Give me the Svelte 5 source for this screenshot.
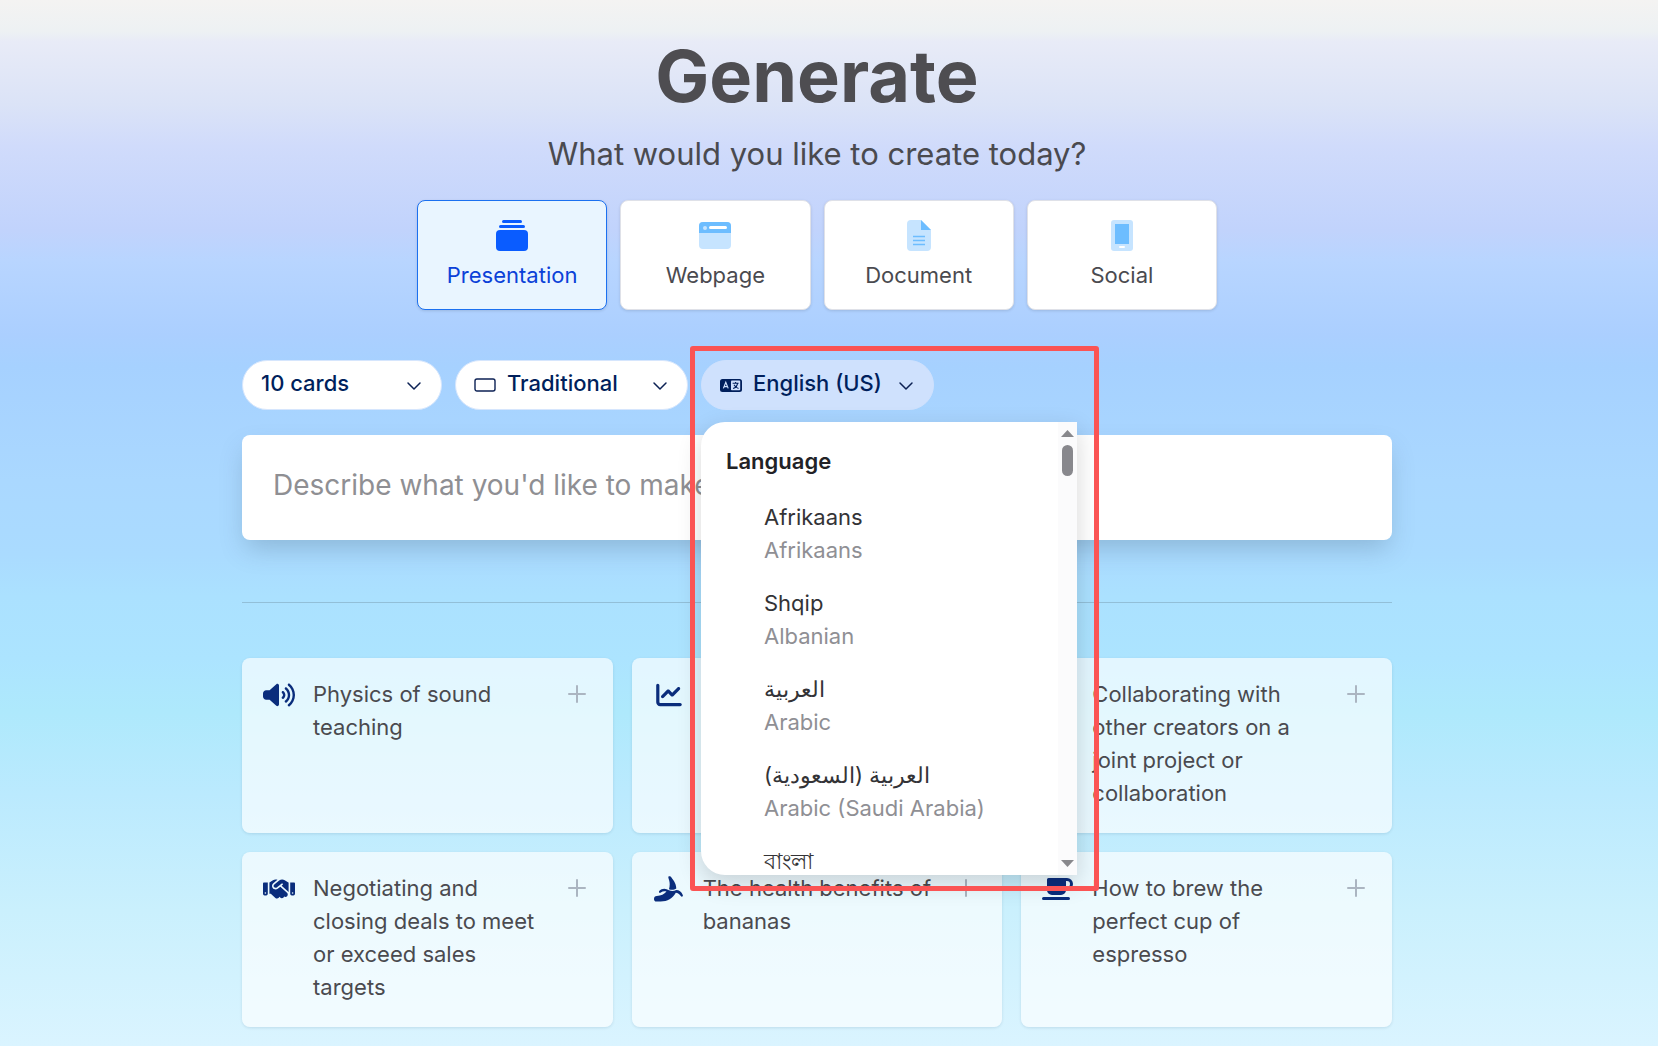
<script lang="ts">
  let selectedType = $state('presentation')
  let languageOpen = $state(true)
  let prompt = $state('')

  const types = [
    { id: 'presentation', label: 'Presentation' },
    { id: 'webpage', label: 'Webpage' },
    { id: 'document', label: 'Document' },
    { id: 'social', label: 'Social' }
  ]

  const languages = [
    { native: 'Afrikaans', name: 'Afrikaans' },
    { native: 'Shqip', name: 'Albanian' },
    { native: 'العربية', name: 'Arabic' },
    { native: 'العربية (السعودية)', name: 'Arabic (Saudi Arabia)' },
    { native: 'বাংলা', name: '' }
  ]

  const ideas = [
    { icon: 'sound', text: 'Physics of sound teaching' },
    { icon: 'chart', text: '' },
    { icon: '', text: 'Collaborating with other creators on a joint project or collaboration' },
    { icon: 'handshake', text: 'Negotiating and closing deals to meet or exceed sales targets' },
    { icon: 'banana', text: 'The health benefits of bananas' },
    { icon: 'cup', text: 'How to brew the perfect cup of espresso' }
  ]
</script>

{#snippet chevron()}
  <svg class="chevron" viewBox="0 0 16 10" aria-hidden="true">
    <path d="M2 2l6 6 6-6" />
  </svg>
{/snippet}

<main class="page">
  <h1>Generate</h1>
  <p class="subtitle">What would you like to create today?</p>

  <div class="types">
    {#each types as type}
      <button
        class="type"
        class:selected={selectedType === type.id}
        onclick={() => (selectedType = type.id)}
      >
        <svg class="type-icon" viewBox="0 0 32 32" aria-hidden="true">
          {#if type.id === 'presentation'}
            <rect x="6" y="0" width="20" height="3" rx="1.5" fill="#0a5cff" />
            <rect x="3" y="5" width="26" height="3" rx="1.5" fill="#0a5cff" />
            <rect x="0" y="10" width="32" height="21" rx="4" fill="#0a5cff" />
          {:else if type.id === 'webpage'}
            <rect x="0" y="2" width="32" height="27" rx="4" fill="#c6e4ff" />
            <path d="M0 13V6a4 4 0 0 1 4-4h24a4 4 0 0 1 4 4v7z" fill="#6dbdff" />
            <circle cx="6" cy="8" r="2" fill="#c6e4ff" />
            <rect x="10" y="6" width="18" height="3" rx="1.5" fill="#fff" />
          {:else if type.id === 'document'}
            <path d="M8 0h10l10 10v17a4 4 0 0 1-4 4H8a4 4 0 0 1-4-4V4a4 4 0 0 1 4-4z" fill="#c6e4ff" />
            <path d="M18 0l10 10H18z" fill="#6dbdff" />
            <path d="M10 16.5h12M10 20.5h12M10 24.5h12" stroke="#6dbdff" stroke-width="1.4" />
          {:else}
            <rect x="5" y="0" width="22" height="31" rx="3" fill="#c6e4ff" />
            <rect x="9" y="4" width="14" height="20" fill="#6dbdff" />
            <rect x="13" y="26" width="6" height="2" rx="1" fill="#fff" />
          {/if}
        </svg>
        {type.label}
      </button>
    {/each}
  </div>

  <section class="workspace">
    <div class="options">
      <button class="pill cards">
        <span>10 cards</span>
        {@render chevron()}
      </button>
      <button class="pill">
        <svg class="pill-icon" viewBox="0 0 22 16" aria-hidden="true">
          <rect x="1" y="2" width="20" height="12" rx="2" fill="none" stroke="#0c2154" stroke-width="1.4" />
        </svg>
        <span>Traditional</span>
        {@render chevron()}
      </button>
      <div class="language">
        <button
          class="pill open"
          aria-haspopup="listbox"
          aria-expanded={languageOpen}
          onclick={() => (languageOpen = !languageOpen)}
        >
          <svg class="pill-icon" viewBox="0 0 22 16" aria-hidden="true">
            <rect x="0" y="2" width="22" height="13" rx="2.5" fill="#001f5c" />
            <rect x="11" y="3.6" width="9.2" height="9.6" rx="0.8" fill="#cfe1fd" />
            <path d="M3.4 11.4L5.8 5.4L8.2 11.4M4.2 9.6h3.2" fill="none" stroke="#cfe1fd" stroke-width="1.2" />
            <path d="M12.6 6.3h6M15.6 5v1.3M17.6 6.4c-.4 2.3-2 4.2-4.5 5.2M14 7.8c1 2 2.2 3 4.5 3.8" fill="none" stroke="#001f5c" stroke-width="1.1" />
          </svg>
          <span>English (US)</span>
          {@render chevron()}
        </button>

        {#if languageOpen}
          <div class="menu">
            <div class="menu-list">
              <h2 id="language-heading">Language</h2>
              <div role="listbox" aria-labelledby="language-heading">
                {#each languages as language}
                  <button class="language-option" role="option" aria-selected="false">
                    <span><bdi>{language.native}</bdi></span>
                    {#if language.name}<small>{language.name}</small>{/if}
                  </button>
                {/each}
              </div>
            </div>
            <div class="scrollbar" aria-hidden="true">
              <svg viewBox="0 0 13 7"><path d="M0 7L6.5 0L13 7z" /></svg>
              <span class="thumb"></span>
              <svg class="down" viewBox="0 0 13 7"><path d="M0 0h13L6.5 7z" /></svg>
            </div>
          </div>
          <div class="highlight"></div>
        {/if}
      </div>
    </div>

    <input
      class="prompt"
      type="text"
      aria-label="Prompt"
      placeholder="Describe what you'd like to make"
      bind:value={prompt}
    />

    <hr />

    <div class="ideas">
      {#each ideas as idea}
        <button class="idea" onclick={() => (prompt = idea.text)}>
          <span class="idea-icon">
            {#if idea.icon === 'sound'}
              <svg viewBox="0 0 640 512" aria-hidden="true">
                <path d="M533.6 32.5C598.5 85.3 640 165.8 640 256s-41.5 170.8-106.4 223.5c-10.3 8.4-25.4 6.8-33.8-3.5s-6.8-25.4 3.5-33.8C557.5 398.2 592 331.2 592 256s-34.5-142.2-88.7-186.3c-10.3-8.4-11.8-23.5-3.5-33.8s23.5-11.8 33.8-3.5zM473.1 107c43.2 35.2 70.9 88.9 70.9 149s-27.7 113.8-70.9 149c-10.3 8.4-25.4 6.8-33.8-3.5s-6.8-25.4 3.5-33.8C475.3 341.3 496 301.1 496 256s-20.7-85.3-53.2-111.8c-10.3-8.4-11.8-23.5-3.5-33.8s23.5-11.8 33.8-3.5zm-60.5 74.5C434.1 199.1 448 225.9 448 256s-13.9 56.9-35.4 74.5c-10.3 8.4-25.4 6.8-33.8-3.5s-6.8-25.4 3.5-33.8C393.1 284.4 400 271 400 256s-6.9-28.4-17.7-37.3c-10.3-8.4-11.8-23.5-3.5-33.8s23.5-11.8 33.8-3.5zM301.1 34.8C312.6 40 320 51.4 320 64V448c0 12.6-7.4 24-18.9 29.2s-25 3.1-34.4-5.3L131.8 352H64c-35.3 0-64-28.7-64-64V224c0-35.3 28.7-64 64-64h67.8L266.7 40.1c9.4-8.4 22.9-10.4 34.4-5.3z" />
              </svg>
            {:else if idea.icon === 'chart'}
              <svg viewBox="-64 0 640 512" aria-hidden="true">
                <path d="M64 64c0-17.7-14.3-32-32-32S0 46.3 0 64V400c0 44.2 35.8 80 80 80H480c17.7 0 32-14.3 32-32s-14.3-32-32-32H80c-8.8 0-16-7.2-16-16V64zm406.6 86.6c12.5-12.5 12.5-32.8 0-45.3s-32.8-12.5-45.3 0L320 210.7l-57.4-57.4c-12.5-12.5-32.8-12.5-45.3 0l-112 112c-12.5 12.5-12.5 32.8 0 45.3s32.8 12.5 45.3 0L240 221.3l57.4 57.4c12.5 12.5 32.8 12.5 45.3 0l128-128z" />
              </svg>
            {:else if idea.icon === 'handshake'}
              <svg viewBox="0 0 640 512" aria-hidden="true">
                <path d="M323.4 85.2l-96.8 78.4c-16.1 13-19.2 36.4-7 53.1c12.9 17.8 38 21.3 55.3 7.8l99.3-77.2c7-5.4 17-4.2 22.5 2.8s4.2 17-2.8 22.5l-20.9 16.2L512 316.8V128h-.7l-3.9-2.5L434.8 79c-15.3-9.8-33.2-15-51.4-15c-21.8 0-43 7.5-60 21.2zm22.8 124.4l-51.7 40.2C263 274.3 217.3 268 193.7 235.6c-22.2-30.5-16.6-73.1 12.7-96.8l83.2-67.3c-11.6-4.9-24.1-7.4-36.8-7.4C234 64 215.7 69.6 200 80l-72 48V352h28.2l91.4 83.4c19.6 17.9 49.9 16.5 67.8-3.1c5.5-6.1 9.2-13.2 11.1-20.6l17 15.6c19.5 17.9 49.9 16.6 67.8-2.9c4.5-4.9 7.8-10.6 9.9-16.5c19.4 13 45.8 10.3 62.1-7.5c17.9-19.5 16.6-49.9-2.9-67.8l-134.2-123zM16 128c-8.8 0-16 7.2-16 16V352c0 17.7 14.3 32 32 32H64c17.7 0 32-14.3 32-32V128H16zM48 320a16 16 0 1 1 0 32 16 16 0 1 1 0-32zM544 128V352c0 17.7 14.3 32 32 32h32c17.7 0 32-14.3 32-32V144c0-8.8-7.2-16-16-16H544zm32 208a16 16 0 1 1 32 0 16 16 0 1 1-32 0z" />
              </svg>
            {:else if idea.icon === 'banana'}
              <svg viewBox="0 0 32 26" aria-hidden="true">
                <path d="M15.5 0.5c1-.7 2.3-.3 2.8.8 1 2 4.8 5 5 11.2-2 1.5-4.8 1.7-7.3.7.8-2.8 1-5.7.2-8.8-.4-1.4-1.3-2.7-.7-3.9z" />
                <path d="M16 14.3c2.5 1.2 5 1 7.2-.3 2.8 0 5.3 1.8 6.6 5 .6 1.5-1.2 2.3-2 1.100-1.300-2-3-3.200-5-3.300-3.200 5.800-8.200 8.700-15.200 8.700H3.500c-1.800 0-2.500-1.200-2.500-2.600 0-1.900 1-3 2.800-3 4.200-.2 7.500-1.500 9.700-4.300-2.100-.8-4-.3-5.700 1-1.200.9-2.400-.4-1.600-1.500 2.600-2.800 6.300-3 9.800-.8z" />
              </svg>
            {:else if idea.icon === 'cup'}
              <svg viewBox="0 0 32 26" aria-hidden="true">
                <path fill-rule="evenodd" d="M6.5 2H25a6 6 0 0 1 0 12H24a5 5 0 0 1-5 5H10a5 5 0 0 1-5-5V3.5A1.5 1.5 0 0 1 6.500 2zM24 5v6h1a3 3 0 0 0 0-6z" />
                <rect x="0" y="21" width="28" height="3" rx="1.5" />
              </svg>
            {/if}
          </span>
          <span class="idea-text">{idea.text}</span>
          {#if idea.text}
            <svg class="plus" viewBox="0 0 18 18" aria-hidden="true">
              <path d="M9 1v16M1 9h16" />
            </svg>
          {/if}
        </button>
      {/each}
    </div>
  </section>
</main>

<style>
  :global(body) {
    margin: 0;
  }

  .page {
    box-sizing: border-box;
    display: flex;
    flex-direction: column;
    align-items: center;
    min-height: 100vh;
    padding: 36px 24px 19px 0;
    font-family: Inter, "Noto Sans", "Liberation Sans", sans-serif;
    font-size: 22px;
    line-height: 33px;
    color: #4a4a4f;
    background: linear-gradient(
      to bottom,
      #f4f3f2 0%,
      #edf1f3 3%,
      #e8ebf7 4%,
      #dbe3f7 10%,
      #d0dbfb 14%,
      #c1d3fc 22%,
      #b8d5ff 25%,
      #abcfff 32%,
      #a6d1ff 35%,
      #aad8ff 46%,
      #aadbff 53%,
      #abe1ff 57%,
      #ace4ff 63%,
      #aee9fc 68%,
      #bbeafe 76%,
      #caf0fd 87%,
      #daf4ff 100%
    );
  }

  button,
  input {
    font: inherit;
    color: inherit;
    border: 0;
  }

  button {
    cursor: pointer;
  }

  h1 {
    margin: 0;
    font-size: 72px;
    line-height: 80px;
    font-weight: 700;
    color: #4e4d51;
  }

  .subtitle {
    margin: 16px 0 25px;
    font-size: 31px;
    line-height: 43px;
  }

  .types {
    display: grid;
    grid-template-columns: repeat(4, 1fr);
    gap: 13px;
    width: 800px;
    max-width: 100%;
  }

  .type {
    display: flex;
    flex-direction: column;
    align-items: center;
    gap: 7px;
    height: 110px;
    padding: 19px 0 0;
    border: 1px solid #dfe1e8;
    border-radius: 8px;
    background: #fff;
    box-shadow: 0 1px 3px rgba(0, 0, 0, 0.12);
  }

  .type.selected {
    color: #0b41d8;
    border-color: #1b70f0;
    background: #e9f5ff;
  }

  .type-icon {
    width: 32px;
    height: 32px;
  }

  .workspace {
    width: 1150px;
    max-width: 100%;
    margin-top: 50px;
  }

  .options {
    display: flex;
    gap: 13px;
    margin-bottom: 25px;
  }

  .pill {
    box-sizing: border-box;
    display: flex;
    align-items: center;
    width: 233px;
    height: 50px;
    padding: 0 19px 3px 18px;
    border: 1px solid #d6e6fd;
    border-radius: 25px;
    font-weight: 500;
    color: #001f5c;
    background: #fff;
  }

  .pill.cards {
    width: 200px;
  }

  .pill.open {
    border-color: #cfe1fd;
    background: #cfe1fd;
  }

  .pill-icon {
    width: 22px;
    height: 16px;
    margin: 3px 11px 0 0;
  }

  .chevron {
    width: 16px;
    height: 10px;
    margin: 4px 0 0 auto;
  }

  .chevron path {
    fill: none;
    stroke: #0c2154;
    stroke-width: 1.5;
    stroke-linecap: round;
    stroke-linejoin: round;
  }

  .language {
    position: relative;
  }

  .menu {
    position: absolute;
    z-index: 2;
    top: 62px;
    left: 0;
    display: flex;
    width: 376px;
    height: 453px;
    border-radius: 24px 0 0 24px;
    background: #fff;
    box-shadow: 0 8px 24px rgba(0, 0, 0, 0.16);
  }

  .menu-list {
    flex: 1;
    padding-top: 23px;
    overflow: hidden;
  }

  h2 {
    margin: 0 0 13px;
    padding-left: 25px;
    font-size: 22px;
    line-height: 33px;
    font-weight: 600;
    color: #222226;
  }

  .language-option {
    display: block;
    width: 100%;
    padding: 10px 20px 10px 63px;
    text-align: left;
    color: #333336;
    background: none;
  }

  .language-option span,
  .language-option small {
    display: block;
    height: 33px;
    font-size: 22px;
    white-space: nowrap;
  }

  .language-option small {
    color: #8f8f94;
  }

  .scrollbar {
    display: flex;
    flex-direction: column;
    align-items: center;
    box-sizing: border-box;
    width: 19px;
    padding: 8px 0;
    background: #fbfbfc;
  }

  .scrollbar svg {
    width: 13px;
    height: 7px;
    fill: #88888c;
  }

  .scrollbar .down {
    margin-top: auto;
  }

  .thumb {
    width: 11px;
    height: 31px;
    margin-top: 8px;
    border-radius: 6px;
    background: #88888d;
  }

  .highlight {
    position: absolute;
    z-index: 3;
    top: -14px;
    left: -11px;
    box-sizing: border-box;
    width: 409px;
    height: 545px;
    border: 5px solid #fb5454;
    border-radius: 3px;
    pointer-events: none;
  }

  .prompt {
    box-sizing: border-box;
    display: block;
    width: 100%;
    height: 105px;
    padding: 0 31px 6px;
    border-radius: 8px;
    font-size: 28px;
    background: #fff;
    box-shadow: 0 12px 26px -4px rgba(60, 90, 110, 0.28);
  }

  .prompt::placeholder {
    color: #8f8f93;
    opacity: 1;
  }

  hr {
    height: 1px;
    margin: 62px 0 55px;
    border: 0;
    background: #92bfd8;
  }

  .ideas {
    display: grid;
    grid-template-columns: repeat(3, 1fr);
    grid-auto-rows: 175px;
    gap: 19px;
  }

  .idea {
    display: flex;
    align-items: flex-start;
    padding: 20px 27px 0 21px;
    border-radius: 8px;
    text-align: left;
    background: rgba(255, 255, 255, 0.66);
    box-shadow: 0 1px 3px rgba(0, 60, 90, 0.12);
  }

  .idea-icon {
    flex: none;
    width: 32px;
    height: 26px;
    margin: 4px 18px 0 0;
  }

  .idea-icon svg {
    display: block;
    width: 32px;
    height: 26px;
    fill: #0a2d7c;
  }

  .idea-text {
    flex: 1;
  }

  .plus {
    flex: none;
    width: 18px;
    height: 18px;
    margin: 7px 0 0 20px;
  }

  .plus path {
    fill: none;
    stroke: #abb5c1;
    stroke-width: 2;
    stroke-linecap: round;
  }
</style>
